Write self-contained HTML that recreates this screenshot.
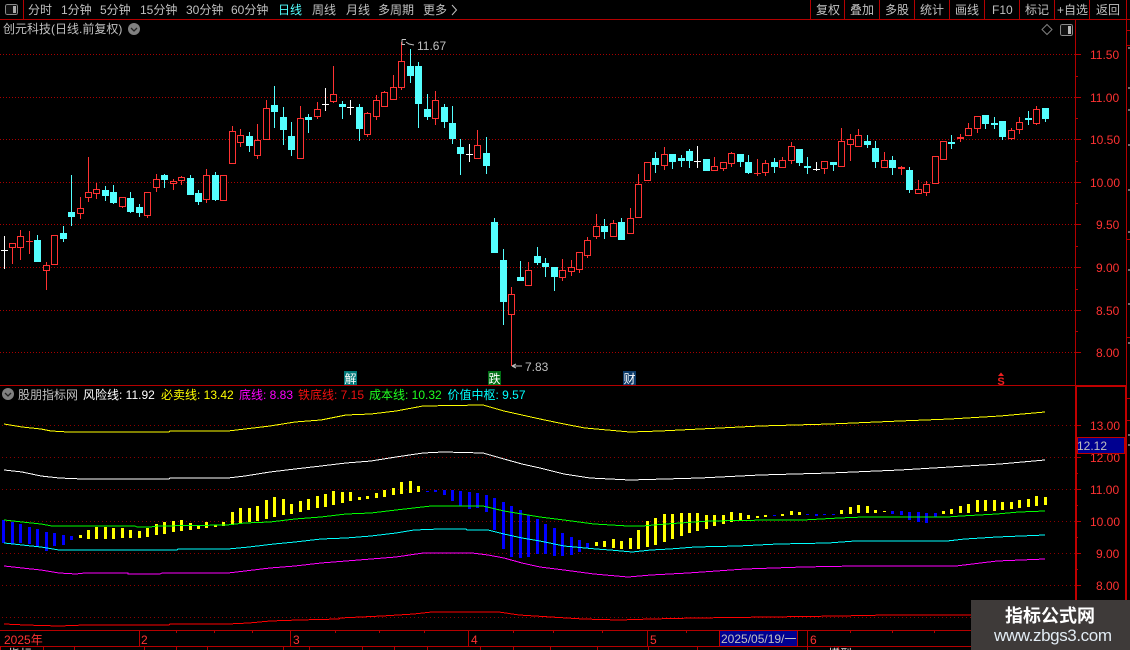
<!DOCTYPE html>
<html lang="zh-CN">
<head>
<meta charset="utf-8">
<title>创元科技</title>
<style>
html,body{margin:0;padding:0;background:#000;width:1130px;height:650px;overflow:hidden}
svg{display:block}
text{font-family:"Liberation Sans","WenQuanYi Zen Hei","Noto Sans CJK SC",sans-serif;font-size:12px;fill:#c0c0c0}
.a text{fill:#ff3232}
.c{shape-rendering:crispEdges}
</style>
</head>
<body>
<svg width="1130" height="650" viewBox="0 0 1130 650" xmlns="http://www.w3.org/2000/svg">
<rect width="1130" height="650" fill="#000"/>

<!-- grid -->
<g class="c" fill="none" stroke="#a80000" stroke-dasharray="1 2">
<path d="M0 54.5H1075M0 97.5H1075M0 139.5H1075M0 182.5H1075M0 224.5H1075M0 267.5H1075M0 310.5H1075M0 352.5H1075"/>
</g>
<g class="c" fill="none" stroke="#8c0000" stroke-dasharray="1 3">
<path d="M2 425.5H1075M2 457.5H1075M2 489.5H1075M2 521.5H1075M2 553.5H1075M2 585.5H1075M2 617.5H1075"/>
</g>

<!-- frame -->
<g class="c" fill="none" stroke="#b40000">
<path d="M0 19.5H1130M0 385.5H1076M0 630.5H971M0 646.5H971"/>
<path d="M23.5 0V19M810.5 0V19M844.5 0V19M879.5 0V19M914.5 0V19M949.5 0V19M984.5 0V19M1019.5 0V19M1054.5 0V19M1089.5 0V19"/>
<path d="M1075.5 19V386M1126.5 0V386"/>
<path d="M1075 54.5H1081M1075 97.5H1081M1075 139.5H1081M1075 182.5H1081M1075 224.5H1081M1075 267.5H1081M1075 310.5H1081M1075 352.5H1081"/>
<path d="M1075 76.5H1078M1075 118.5H1078M1075 161.5H1078M1075 203.5H1078M1075 246.5H1078M1075 289.5H1078M1075 331.5H1078"/>
<path d="M1076 425.5H1081M1076 457.5H1081M1076 489.5H1081M1076 521.5H1081M1076 553.5H1081M1076 585.5H1081M1076 441.5H1078M1076 473.5H1078M1076 505.5H1078M1076 537.5H1078M1076 569.5H1078"/>
<path d="M1126 30.5H1130M1126 45.5H1130M1126 239.5H1130M1126 337.5H1130M1126 398.5H1130M1126 420.5H1130"/>
<path d="M139.5 630V646M290.5 630V646M468.5 630V646M647.5 630V646M807.5 630V646"/>
<path d="M176.5 630V633M214.5 630V633M252.5 630V633M335.5 630V633M379.5 630V633M424.5 630V633M513.5 630V633M553.5 630V633M602.5 630V633M686.5 630V633M850.5 630V633M892.5 630V633M934.5 630V633"/>
<path d="M0.5 646V650M43.5 646V650M74.5 646V650M144.5 646V650M176.5 646V650M207.5 646V650M283.5 646V650M309.5 646V650M362.5 646V650M394.5 646V650M427.5 646V650M480.5 646V650M513.5 646V650M550.5 646V650M597.5 646V650M648.5 646V650M697.5 646V650M807.5 646V650M838.5 646V650"/>
</g>
<g fill="none" stroke="#c00000" stroke-width="2" class="c">
<path d="M1076 386H1126M1076 386V630M1126 386V600"/>
</g>
<path class="c" d="M1128 48h2M1128 88h2M1128 110h2M1128 145h2M1128 190h2M1128 232h2M1128 270h2M1128 304h2M1128 343h2M1128 435h2M1128 445h2" stroke="#ddd" fill="none"/>

<!-- top bar -->
<rect class="c" x="5.5" y="4.5" width="12" height="10" rx="2" fill="#111" stroke="#8a8a8a"/>
<rect class="c" x="13" y="6" width="3" height="7" fill="#aaa"/>
<text x="28" y="14">分时</text>
<text x="61" y="14">1分钟</text>
<text x="100" y="14">5分钟</text>
<text x="140" y="14">15分钟</text>
<text x="186" y="14">30分钟</text>
<text x="231" y="14">60分钟</text>
<text x="278" y="14" style="fill:#54ffff">日线</text>
<text x="312" y="14">周线</text>
<text x="346" y="14">月线</text>
<text x="378" y="14">多周期</text>
<text x="423" y="14">更多</text>
<path d="M452 5l4.5 5-4.5 5" fill="none" stroke="#c0c0c0"/>
<text x="816" y="14">复权</text>
<text x="850" y="14">叠加</text>
<text x="885" y="14">多股</text>
<text x="920" y="14">统计</text>
<text x="955" y="14">画线</text>
<text x="992" y="14">F10</text>
<text x="1025" y="14">标记</text>
<text x="1057" y="14">+自选</text>
<text x="1096" y="14">返回</text>

<!-- title row -->
<text x="3" y="33">创元科技(日线.前复权)</text>
<circle cx="134" cy="29" r="6" fill="#808080"/>
<path d="M131 28l3 3 3-3" fill="none" stroke="#222" stroke-width="1.3"/>
<path d="M1047 24.5l5 5-5 5-5-5z" fill="none" stroke="#808080"/>
<rect class="c" x="1060.5" y="24.5" width="12" height="11" rx="2" fill="#111" stroke="#8a8a8a"/>
<rect class="c" x="1068" y="26" width="3" height="8" fill="#bbb"/>

<g transform="translate(-1 0)">
<!-- red candles -->
<path class="c" fill="none" stroke="#ff3232" d="M13.5 264V247M21.5 230V236M21.5 247V260M30.5 231V254M27 241.5H34M47.5 262V265M47.5 270V290M55.5 264V265M81.5 197V208M81.5 213V219M89.5 157V192M89.5 197V202M97.5 183V189M97.5 193V199M123.5 206V208M148.5 215V218M157.5 174V179M157.5 187V192M174.5 179V181M174.5 183V190M182.5 176V177M182.5 180V185M207.5 169V175M207.5 199V203M224.5 200V201M233.5 126V131M241.5 129V135M241.5 142V147M258.5 124V140M258.5 155V159M267.5 100V108M301.5 106V118M318.5 102V109M318.5 116V119M334.5 66V94M334.5 101V103M368.5 112V113M368.5 134V137M377.5 95V100M377.5 116V120M385.5 91V92M385.5 106V107M394.5 75V87M394.5 99V100M402.5 42V61M402.5 87V90M436.5 91V100M436.5 118V125M478.5 130V145M512.5 287V294M512.5 314V366M529.5 262V270M529.5 285V286M563.5 259V270M563.5 277V281M572.5 260V267M572.5 271V276M580.5 269V273M588.5 237V240M588.5 255V258M597.5 214V226M597.5 236V239M614.5 220V223M631.5 208V218M639.5 174V184M639.5 217V218M665.5 147V154M665.5 165V170M715.5 157V166M715.5 170V171M724.5 168V171M732.5 152V153M732.5 163V167M758.5 159V176M755 173.5H762M766.5 160V163M766.5 172V176M783.5 157V160M792.5 142V146M792.5 160V164M825.5 168V174M842.5 128V141M851.5 134V139M851.5 144V161M859.5 129V135M885.5 152V160M902.5 166V175M919.5 180V189M927.5 181V184M927.5 192V196M944.5 159V160M961.5 134V137M961.5 138V142M969.5 123V128M969.5 135V136M978.5 128V133M1012.5 128V130M1012.5 138V140M1020.5 117V122M1020.5 129V134M1037.5 106V109M1037.5 123V125"/>
<path class="c" fill="#000" stroke="#ff3232" d="M10.5 243.5h6v4h-6zM18.5 236.5h6v11h-6zM44.5 265.5h6v5h-6zM52.5 235.5h6v29h-6zM78.5 208.5h6v5h-6zM86.5 192.5h6v5h-6zM94.5 189.5h6v4h-6zM120.5 197.5h6v9h-6zM145.5 192.5h6v23h-6zM154.5 179.5h6v8h-6zM171.5 181.5h6v2h-6zM179.5 177.5h6v3h-6zM204.5 175.5h6v24h-6zM221.5 175.5h6v25h-6zM230.5 131.5h6v32h-6zM238.5 135.5h6v7h-6zM255.5 140.5h6v15h-6zM264.5 108.5h6v31h-6zM298.5 118.5h6v40h-6zM315.5 109.5h6v7h-6zM331.5 94.5h6v7h-6zM365.5 113.5h6v21h-6zM374.5 100.5h6v16h-6zM382.5 92.5h6v14h-6zM391.5 87.5h6v12h-6zM399.5 61.5h6v26h-6zM433.5 100.5h6v18h-6zM475.5 145.5h6v13h-6zM509.5 294.5h6v20h-6zM526.5 270.5h6v15h-6zM560.5 270.5h6v7h-6zM569.5 267.5h6v4h-6zM577.5 252.5h6v17h-6zM585.5 240.5h6v15h-6zM594.5 226.5h6v10h-6zM611.5 223.5h6v13h-6zM628.5 218.5h6v15h-6zM636.5 184.5h6v33h-6zM645.5 162.5h6v18h-6zM662.5 154.5h6v11h-6zM712.5 166.5h6v4h-6zM721.5 162.5h6v6h-6zM729.5 153.5h6v10h-6zM763.5 163.5h6v9h-6zM780.5 160.5h6v7h-6zM789.5 146.5h6v14h-6zM822.5 161.5h6v7h-6zM839.5 141.5h6v25h-6zM848.5 139.5h6v5h-6zM856.5 135.5h6v11h-6zM882.5 160.5h6v7h-6zM916.5 189.5h6v4h-6zM924.5 184.5h6v8h-6zM933.5 156.5h6v27h-6zM941.5 141.5h6v18h-6zM966.5 128.5h6v7h-6zM975.5 116.5h6v12h-6zM1009.5 130.5h6v8h-6zM1017.5 122.5h6v7h-6zM1034.5 109.5h6v14h-6z"/>
<path class="c" fill="#ff3232" d="M899 167h7v2h-7zM958 137h7v2h-7z"/>

<!-- cyan candles -->
<path class="c" fill="none" stroke="#54ffff" d="M38.5 235V262M64.5 226V242M72.5 175V226M106.5 186V201M114.5 185V204M131.5 192V213M140.5 204V217M165.5 174V188M191.5 175V195M199.5 190V205M216.5 172V201M250.5 132V152M275.5 86V128M284.5 107V145M292.5 122V156M309.5 114V133M343.5 101V119M360.5 104V141M411.5 49V83M419.5 62V128M428.5 94V120M445.5 104V128M453.5 106V144M461.5 139V175M487.5 137V174M495.5 218V253M504.5 249V325M521.5 261V281M538.5 247V265M546.5 258V277M555.5 267V291M605.5 219V239M622.5 218V240M656.5 152V173M673.5 154V169M682.5 155V167M690.5 149V168M707.5 159V171M741.5 154V167M749.5 155V174M775.5 158V173M800.5 149V166M808.5 157V174M834.5 162V171M868.5 135V148M876.5 141V168M893.5 156V175M910.5 167V193M952.5 135V149M986.5 115V129M995.5 117V129M1003.5 121V140M1029.5 111V125M1046.5 108V122"/>
<path class="c" fill="#54ffff" d="M35 240h7v22h-7zM61 233h7v6h-7zM69 212h7v5h-7zM103 190h7v6h-7zM111 192h7v11h-7zM128 198h7v14h-7zM137 207h7v6h-7zM162 175h7v5h-7zM188 178h7v17h-7zM196 193h7v9h-7zM213 175h7v25h-7zM247 136h7v10h-7zM272 105h7v7h-7zM281 117h7v13h-7zM289 136h7v14h-7zM306 117h7v3h-7zM340 104h7v3h-7zM357 107h7v22h-7zM408 66h7v10h-7zM416 66h7v38h-7zM425 109h7v8h-7zM442 107h7v15h-7zM450 123h7v16h-7zM458 147h7v7h-7zM484 153h7v13h-7zM492 222h7v31h-7zM501 260h7v42h-7zM518 277h7v4h-7zM535 256h7v7h-7zM543 263h7v4h-7zM552 267h7v10h-7zM602 226h7v6h-7zM619 222h7v18h-7zM653 158h7v7h-7zM670 154h7v8h-7zM679 158h7v3h-7zM687 151h7v10h-7zM704 159h7v12h-7zM738 154h7v8h-7zM746 162h7v11h-7zM772 162h7v5h-7zM797 149h7v14h-7zM805 166h7v2h-7zM831 162h7v3h-7zM865 141h7v4h-7zM873 148h7v14h-7zM890 160h7v8h-7zM907 170h7v20h-7zM949 142h7v2h-7zM983 115h7v9h-7zM992 123h7v2h-7zM1000 121h7v16h-7zM1026 118h7v2h-7zM1043 108h7v11h-7z"/>

<!-- white dojis -->
<path class="c" fill="none" stroke="#fff" d="M5.5 236V269M2 250.5H9M326.5 88V111M323 104.5H330M351.5 100V115M348 107.5H355M470.5 144V162M467 154.5H474M698.5 146V168M695 161.5H702M817.5 162V171M814 169.5H821"/>
</g>

<!-- hi/lo annotations -->
<path d="M402 39.5h4M402 39.5v5h3M406 42l3 2 5 1" fill="none" stroke="#c0c0c0"/>
<text x="417" y="50">11.67</text>
<path d="M512 366h10M512 366l4-2M512 366l4 2" fill="none" stroke="#c0c0c0"/>
<text x="525" y="371">7.83</text>

<!-- markers -->
<rect class="c" x="344" y="371" width="13" height="14" fill="#007878"/>
<text x="344.5" y="383" style="fill:#fff">解</text>
<rect class="c" x="488" y="371" width="13" height="14" fill="#006e14"/>
<text x="488.5" y="383" style="fill:#fff">跌</text>
<rect class="c" x="623" y="371" width="13" height="14" fill="#0c3a68"/>
<text x="623.5" y="383" style="fill:#fff">财</text>
<path d="M1001 372.5l3 3.5h-6z" fill="#f02020"/>
<text x="1001" y="385" text-anchor="middle" style="fill:#f02020;font-weight:bold;font-size:11px">S</text>

<!-- axis labels -->
<g class="a">
<text x="1090" y="59">11.50</text>
<text x="1090" y="102">11.00</text>
<text x="1090" y="144">10.50</text>
<text x="1090" y="187">10.00</text>
<text x="1096" y="229">9.50</text>
<text x="1096" y="272">9.00</text>
<text x="1096" y="315">8.50</text>
<text x="1096" y="357">8.00</text>
<text x="1090" y="430">13.00</text>
<text x="1090" y="462">12.00</text>
<text x="1090" y="494">11.00</text>
<text x="1090" y="526">10.00</text>
<text x="1096" y="558">9.00</text>
<text x="1096" y="590">8.00</text>
<text x="4" y="644">2025年</text>
<text x="141" y="644">2</text>
<text x="293" y="644">3</text>
<text x="471" y="644">4</text>
<text x="650" y="644">5</text>
<text x="810" y="644">6</text>
</g>
<rect class="c" x="1077.5" y="437.5" width="47" height="16" fill="#000090" stroke="#c00000"/>
<text x="1077" y="450">12.12</text>
<rect class="c" x="719.5" y="630.5" width="78" height="16" fill="#000090" stroke="#c00000"/>
<text x="721" y="643">2025/05/19/一</text>

<!-- indicator title -->
<circle cx="8" cy="394" r="6" fill="#808080"/>
<path d="M5 393l3 3 3-3" fill="none" stroke="#222" stroke-width="1.3"/>
<text x="18" y="399">股朋指标网</text>
<text x="83" y="399" style="fill:#fff">风险线: 11.92</text>
<text x="161" y="399" style="fill:#ff0">必卖线: 13.42</text>
<text x="239" y="399" style="fill:#f0f">底线: 8.83</text>
<text x="298" y="399" style="fill:#f01010">铁底线: 7.15</text>
<text x="369" y="399" style="fill:#20ff20">成本线: 10.32</text>
<text x="447.5" y="399" style="fill:#00ffff">价值中枢: 9.57</text>

<!-- indicator bars -->
<g transform="translate(-.5 0)">
<path class="c" fill="none" stroke="#ffff00" stroke-width="3" d="M81 535V538M89 530V539M97 527V539M106 527V539M114 528V539M123 528V538M131 530V538M140 531V538M148 528V537M157 524V535M165 522V534M174 521V532M182 520V531M191 523V530M199 526V529M207 522V528M216 525V527M224 522V526M233 512V525M241 508V523M250 508V522M258 506V521M267 500V519M275 497V517M284 499V515M292 504V514M301 501V512M309 499V510M318 496V508M326 494V507M334 491V505M343 492V503M351 492V501M360 497V500M368 496V499M377 493V498M385 490V497M394 488V495M402 482V494M411 481V493M419 486V492M597 542V546M605 541V547M614 539V548M622 541V549M631 538V549M639 530V549M648 521V547M656 518V545M665 514V542M673 514V539M682 513V536M690 513V533M698 513V531M707 515V529M715 515V526M724 515V524M732 512V522M741 513V520M749 515V519M758 516V518M766 515V517M783 514V516M792 511V515M800 512V515M842 510V514M851 507V514M859 505V513M868 506V513M876 510V513M885 511V512M944 511V514M952 509V514M961 506V513M969 504V513M978 500V512M986 500V511M995 500V511M1003 502V510M1012 502V509M1020 500V508M1029 499V507M1037 496V506M1046 497V505"/>
<path class="c" fill="none" stroke="#0000ff" stroke-width="3" d="M4 520V543M13 522V544M21 524V543M30 527V544M38 529V547M47 532V551M55 533V546M64 535V545M72 536V540M428 491V492M436 490V492M445 490V495M453 490V501M461 491V506M470 492V509M478 493V508M487 495V512M495 498V530M504 502V549M512 506V557M521 510V558M529 515V557M538 519V554M546 524V554M555 528V556M563 533V556M572 537V555M580 540V552M588 543V548M775 515V516M808 514V515M817 514V516M825 514V515M834 514V515M893 511V514M902 511V515M910 512V520M919 512V522M927 513V523M936 513V517"/>
</g>

<!-- indicator lines -->
<g class="c" fill="none">
<polyline stroke="#ff0" points="4,424 22,427 41,429 51,431 68,432 169,432 170,431 228,431 245,429 270,426 295,422 321,420 346,415 371,414 396,411 423,406 483,405 504,411 522,415 540,419 564,424 585,428 630,432 660,431 700,429 760,426 830,424 900,421 950,419 1000,416 1045,412"/>
<polyline stroke="#fff" points="4,470 22,472 41,476 59,478 83,479 169,479 170,478 228,478 245,476 270,472 295,469 321,466 346,463 371,461 396,457 423,453 443,452 483,453 504,459 522,464 540,468 564,474 590,478 630,480 700,478 760,475 830,473 900,470 950,467 1000,464 1045,460"/>
<polyline stroke="#00ff00" points="4,520 22,522 41,524 52,526 135,526 137,527 150,527 158,526 227,525 245,523 270,522 295,519 321,517 346,514 371,513 396,510 431,506 483,506 504,511 522,514 540,517 564,520 594,524 628,526 642,526 666,524 709,521 770,520 803,520 839,518 864,517 947,517 961,516 997,514 1019,512 1045,511"/>
<polyline stroke="#00ffff" points="4,543 22,545 41,547 59,550 177,550 178,549 228,549 249,547 274,544 295,542 321,539 346,538 371,536 396,533 414,530 440,529 466,529 467,530 488,530 504,534 522,538 540,541 564,546 596,549 610,550 632,552 651,550 670,549 695,547 738,546 778,544 828,543 855,541 947,541 965,539 997,537 1045,535"/>
<polyline stroke="#ff00ff" points="4,566 22,568 41,570 59,573 76,574 85,573 128,573 128,574 160,574 162,573 228,573 245,571 270,568 295,566 321,563 346,561 371,559 396,557 423,553 472,553 488,555 504,558 522,563 540,567 564,570 594,574 628,577 651,575 688,573 745,569 803,567 855,566 956,566 997,561 1045,559"/>
<polyline stroke="#ff0000" points="4,624 25,625 59,626 85,625 169,625 170,624 228,624 249,623 270,621 299,620 339,619 340,618 382,616 414,614 432,612 499,612 519,615 551,617 583,619 619,620 651,619 695,618 770,617 839,616 888,615 972,615"/>
</g>

<!-- clipped bottom row text -->
<text x="8" y="658" style="fill:#ddd">指标</text>
<text x="46" y="658" style="fill:#ddd">.</text>
<text x="828" y="658" style="fill:#ddd">模型</text>

<!-- watermark -->
<rect x="971" y="600" width="159" height="50" fill="#3e3a39"/>
<text x="1050" y="622" text-anchor="middle" style="fill:#fff;font-family:'Noto Sans CJK SC',sans-serif;font-weight:bold;font-size:18px">指标公式网</text>
<text x="994" y="641" textLength="118" style="fill:#e2ecf4;font-size:17px">www.zbgs3.com</text>
</svg>
</body>
</html>
